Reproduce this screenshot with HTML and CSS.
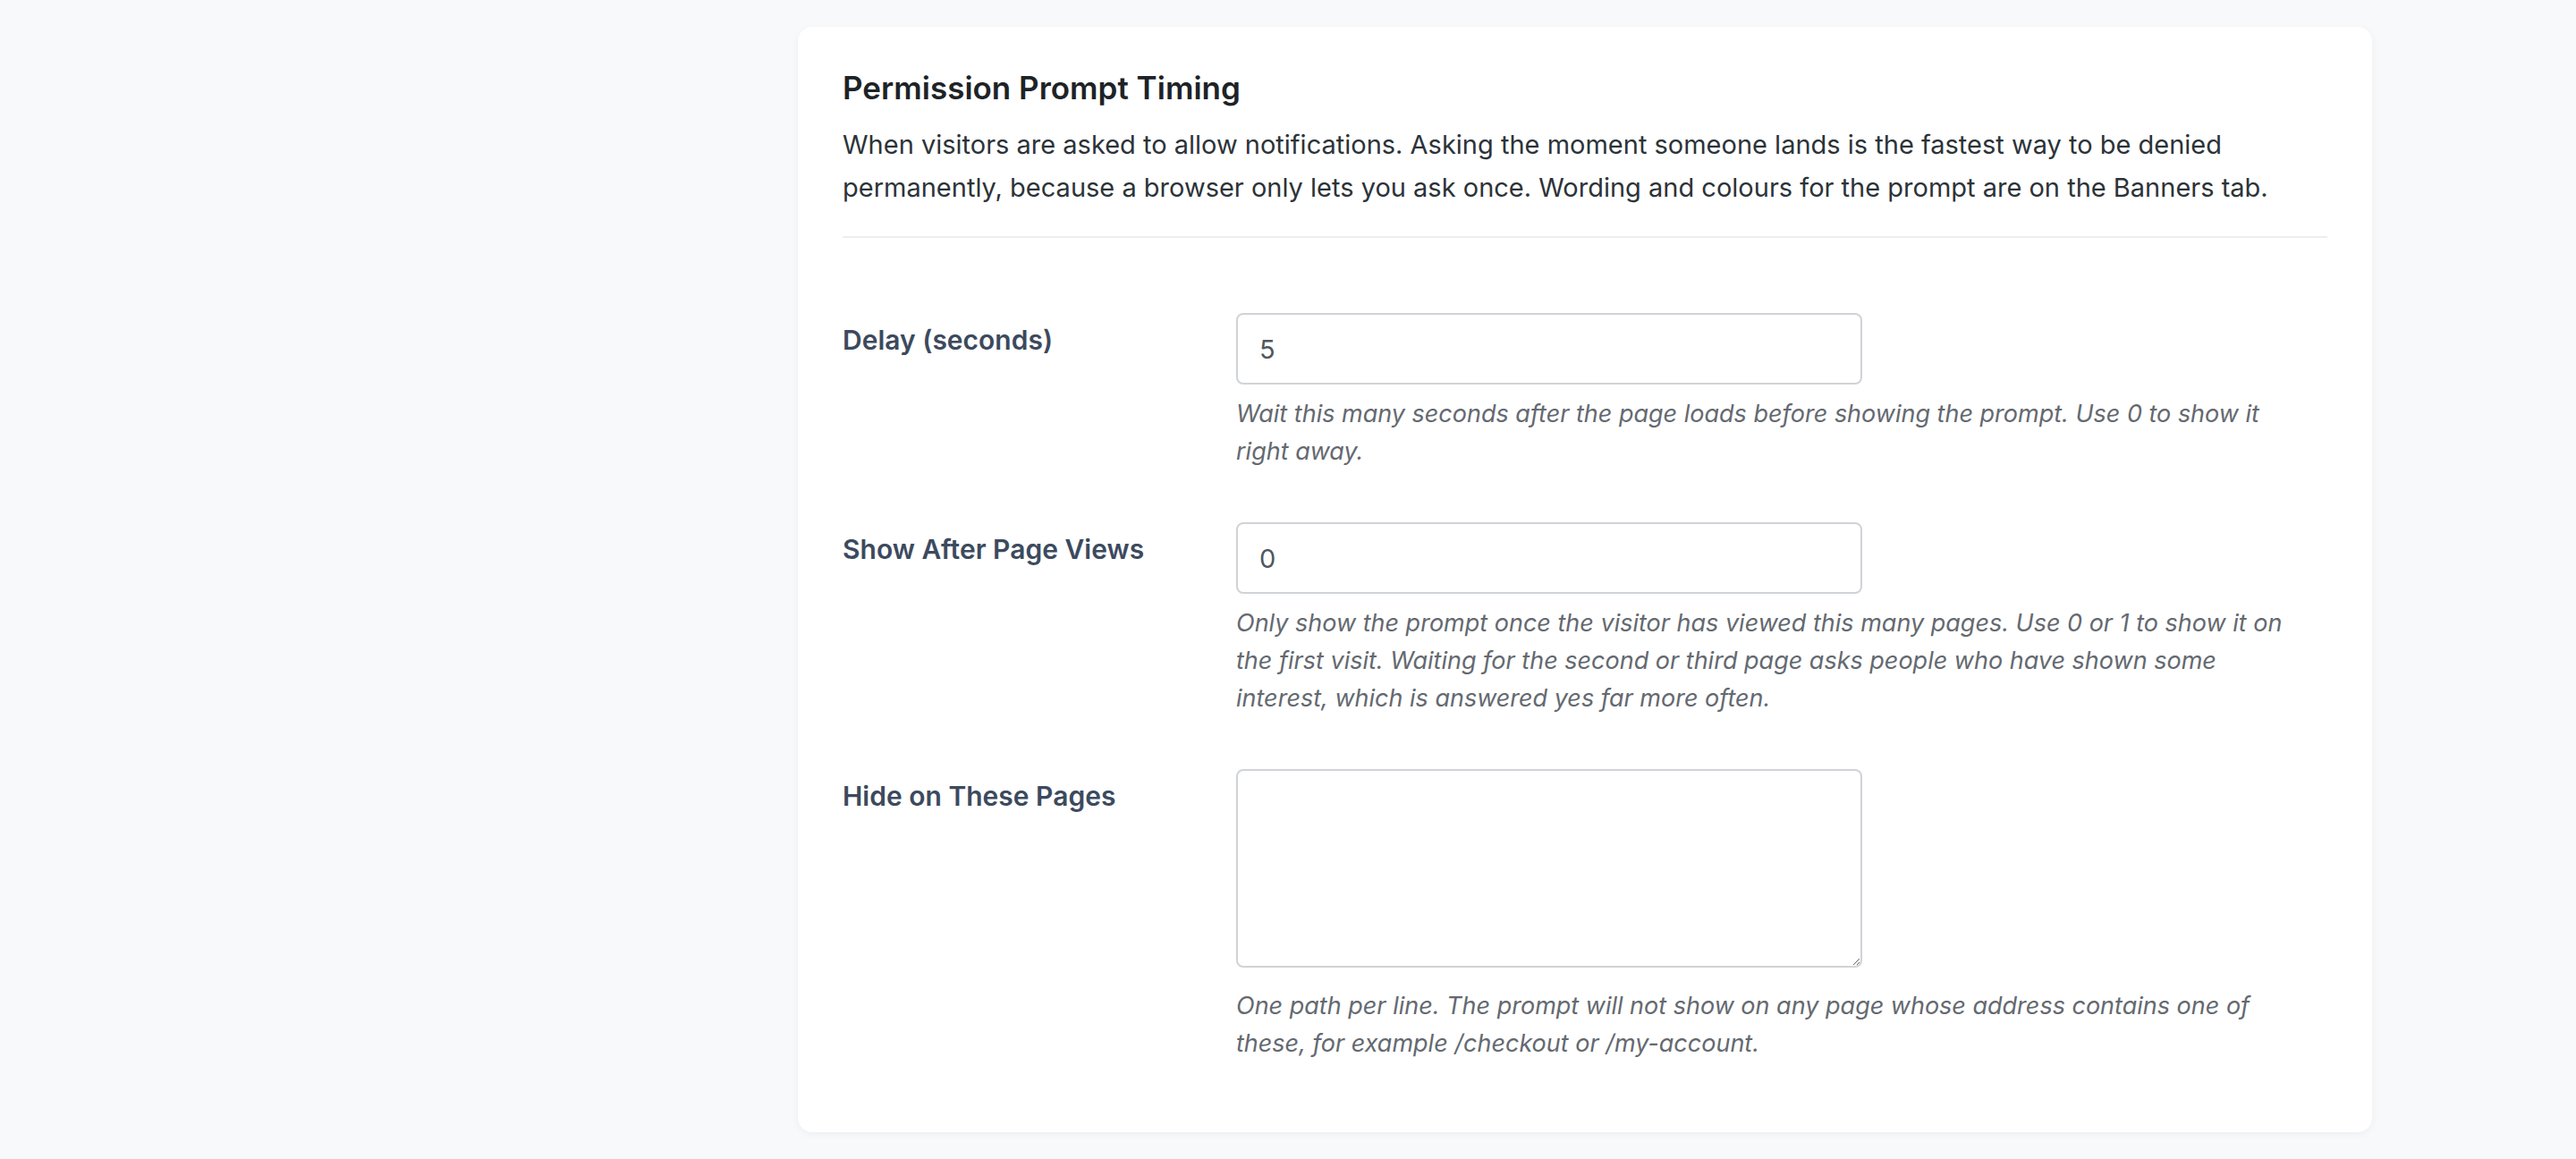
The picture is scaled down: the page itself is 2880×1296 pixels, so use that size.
FILE: index.html
```html
<!DOCTYPE html>
<html lang="en">
<head>
    <meta charset="UTF-8">
    <meta name="viewport" content="width=device-width, initial-scale=1.0">
    <title>Permission Prompt Timing</title>
    <link rel="stylesheet" href="styles.css">
</head>
<body>
    <div class="wrap">
        <div class="card">
            <h2 class="card-title">Permission Prompt Timing</h2>
            <p class="card-intro">When visitors are asked to allow notifications. Asking the moment someone lands is the fastest way to be denied permanently, because a browser only lets you ask once. Wording and colours for the prompt are on the Banners tab.</p>

            <div class="form-rows">
                <!-- Delay -->
                <div class="form-row">
                    <label class="field-label" for="prompt-delay">Delay (seconds)</label>
                    <div class="field">
                        <input class="field-input" type="number" id="prompt-delay" value="5" min="0">
                        <p class="field-help">Wait this many seconds after the page loads before showing the prompt. Use 0 to show it right away.</p>
                    </div>
                </div>

                <!-- Page views -->
                <div class="form-row">
                    <label class="field-label" for="prompt-views">Show After Page Views</label>
                    <div class="field">
                        <input class="field-input" type="number" id="prompt-views" value="0" min="0">
                        <p class="field-help">Only show the prompt once the visitor has viewed this many pages. Use 0 or 1 to show it on the first visit. Waiting for the second or third page asks people who have shown some interest, which is answered yes far more often.</p>
                    </div>
                </div>

                <!-- Excluded paths -->
                <div class="form-row">
                    <label class="field-label" for="prompt-exclude">Hide on These Pages</label>
                    <div class="field">
                        <textarea class="field-input field-textarea" id="prompt-exclude"></textarea>
                        <p class="field-help">One path per line. The prompt will not show on any page whose address contains one of these, for example /checkout or /my-account.</p>
                    </div>
                </div>
            </div>
        </div>
    </div>
</body>
</html>
```

FILE: styles.css
```css
* {
    box-sizing: border-box;
}

body {
    margin: 0;
    background: #f8f9fb;
    font-family: Inter, "Noto Sans", sans-serif;
}

.wrap {
    padding: 30px 0 30px 892px;
}

.card {
    width: 1760px;
    background: #fff;
    border-radius: 16px;
    box-shadow: 0 2px 8px rgba(0,0,0,0.05);
    padding: 48px 50px 50px;
}

.card-title {
    margin: 0;
    font-size: 35px;
    line-height: 40px;
    font-weight: 600;
    color: #1d2327;
}

.card-intro {
    margin: 20px 0 0;
    padding-bottom: 30px;
    border-bottom: 2px solid #eceef0;
    font-size: 29px;
    line-height: 48px;
    color: #2c3338;
}

.form-rows {
    margin-top: 54px;
}

.form-row {
    display: flex;
}

.field-label {
    width: 420px;
    flex-shrink: 0;
    padding: 40px 20px 40px 0;
    font-size: 30px;
    line-height: 40px;
    font-weight: 600;
    color: #3c4a5e;
}

.field {
    flex: 1;
    padding: 30px 20px 28px;
}

.field-input {
    display: block;
    width: 700px;
    height: 80px;
    margin: 0;
    border: 2px solid #d0d3d7;
    border-radius: 8px;
    padding: 0 24px;
    background: #fff;
    font-family: inherit;
    font-size: 29px;
    color: #50575e;
}

.field-textarea {
    height: 222px;
    padding: 12px 24px;
    margin-bottom: 22px;
}

.field-help {
    margin: 12px 0 0;
    font-size: 27px;
    line-height: 42px;
    font-style: italic;
    color: #646970;
}
```
